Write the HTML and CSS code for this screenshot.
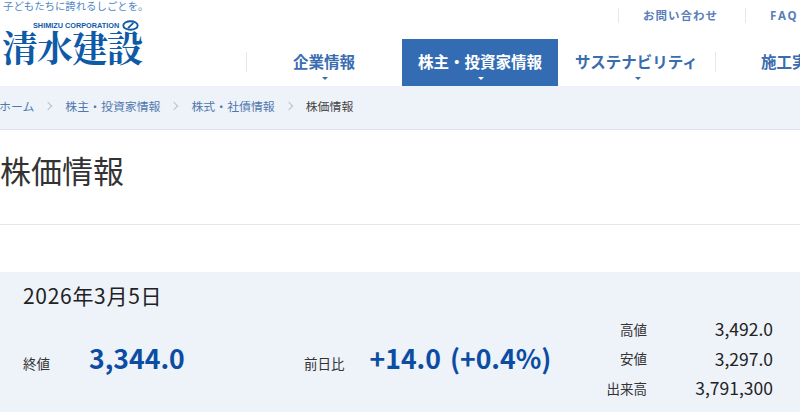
FILE: index.html
```html
<!DOCTYPE html>
<html lang="ja">
<head>
<meta charset="utf-8">
<title>株価情報</title>
<link rel="stylesheet" href="styles.css">
</head>
<body>
<header class="header">
  <div class="brand">
    <p class="tagline">子どもたちに誇れるしごとを。</p>
    <div class="logo">
      <div class="logo-en">
        <span>SHIMIZU CORPORATION</span>
        <svg class="logo-mark" width="17" height="11" viewBox="0 0 17 11"><ellipse cx="8.5" cy="5.5" rx="7.2" ry="4.3" fill="none" stroke="#0e5aa7" stroke-width="1.9"/><path d="M6 8.2 11.4 2.8" stroke="#0e5aa7" stroke-width="1.8" fill="none"/></svg>
      </div>
      <div class="logo-ja">清水建設</div>
    </div>
  </div>
  <div class="header-main">
    <ul class="util">
      <li class="util-item">お問い合わせ</li>
      <li class="util-item util-faq">FAQ</li>
    </ul>
    <nav class="nav">
      <a class="nav-item nav-first">企業情報</a>
      <a class="nav-item nav-active">株主・投資家情報</a>
      <a class="nav-item nav-third">サステナビリティ</a>
      <a class="nav-item nav-last">施工実績</a>
    </nav>
  </div>
</header>
<div class="crumbs">
  <a class="crumb">ホーム</a><span class="sep"></span>
  <a class="crumb">株主・投資家情報</a><span class="sep"></span>
  <a class="crumb">株式・社債情報</a><span class="sep"></span>
  <span class="crumb-now">株価情報</span>
</div>
<h1 class="title">株価情報</h1>
<section class="panel">
  <div class="date">2026年3月5日</div>
  <div class="stats">
    <div class="stat stat-close">
      <span class="label">終値</span><span class="value">3,344.0</span>
    </div>
    <div class="stat stat-change">
      <span class="label">前日比</span><span class="value">+14.0 (+0.4%)</span>
    </div>
    <dl class="side">
      <dt>高値</dt><dd>3,492.0</dd>
      <dt>安値</dt><dd>3,297.0</dd>
      <dt>出来高</dt><dd>3,791,300</dd>
    </dl>
  </div>
</section>
</body>
</html>
```
FILE: styles.css
```css
* { box-sizing: border-box; }
html, body { margin: 0; padding: 0; height: 412px; overflow: hidden; }
body { width: 800px; background: #fff; color: #222; font-family: "Noto Sans CJK JP", "Noto Sans", sans-serif; }
ul, dl, dd, p, h1 { margin: 0; padding: 0; }
ul { list-style: none; }

.header { display: flex; height: 86px; }
.brand { width: 246px; flex: none; }
.tagline { font-size: 10.4px; line-height: 12px; color: #4f86c6; padding-left: 3px; }
.logo { padding-left: 2px; }
.logo-en { display: flex; align-items: center; gap: 3px; margin: 8px 0 0 31px; height: 11px; font-family: "Liberation Sans", sans-serif; font-size: 7.3px; font-weight: 700; color: #0e5aa7; white-space: nowrap; }
.logo-mark { flex: none; }
.logo-ja { font-family: "Noto Serif CJK JP", "Noto Sans CJK JP", serif; font-size: 36px; line-height: 36px; font-weight: 700; color: #0e5aa7; margin-top: -2px; letter-spacing: -1px; white-space: nowrap; }

.header-main { flex: none; width: 554px; display: flex; flex-direction: column; }
.util { display: flex; height: 39px; padding: 8px 0 0 372px; }
.util-item { flex: none; height: 15px; padding: 0 27px 0 24px; border-left: 1px solid #e6e8ec; font-size: 11.5px; line-height: 15px; font-weight: 700; color: #5a7fb8; letter-spacing: 1px; white-space: nowrap; }
.util-faq { font-family: "Noto Sans", sans-serif; font-size: 11.5px; letter-spacing: 1.8px; }

.nav { display: flex; height: 47px; }
.nav-item { position: relative; flex: none; width: 156px; height: 47px; display: flex; justify-content: center; padding-top: 11px; font-size: 15.5px; line-height: 22px; font-weight: 700; color: #3a6cb0; white-space: nowrap; }
.nav-item::after { content: ""; position: absolute; left: 50%; bottom: 6px; margin-left: -2px; border: 3px solid transparent; border-top-color: #3a6cb0; border-bottom: 0; }
.nav-item:not(.nav-active)::before { content: ""; position: absolute; left: 0; top: 13px; height: 20px; border-left: 1px solid #e6e8ec; }
.nav-active { background: #336cb3; color: #fff; }
.nav-active::after { border-top-color: #fff; }
.nav-third { width: 157px; }
.nav-active + .nav-item::before { display: none; }
.nav-last { justify-content: flex-start; padding-left: 46px; }
.nav-last::after { display: none; }

.crumbs { height: 44px; display: flex; align-items: center; padding-bottom: 4px; background: #eef2f9; border-bottom: 1px solid #dfe2e8; font-size: 11.9px; color: #4f78ac; white-space: nowrap; }
.crumb { flex: none; }
.crumb:first-child { margin-left: -1px; }
.crumb-now { color: #444; }
.sep { flex: none; width: 6px; height: 6px; margin: 0 14px 0 11px; border-top: 1.5px solid #bcc0c6; border-right: 1.5px solid #bcc0c6; transform: rotate(45deg); }

.title { height: 95px; border-bottom: 1px solid #e4e6ea; font-size: 31px; line-height: 40px; font-weight: 400; padding-top: 20px; color: #333; }

.panel { margin-top: 47px; height: 141px; background: #eef2f9; padding: 9px 27px 0 23px; }
.date { font-size: 21px; line-height: 28px; color: #222; letter-spacing: .7px; }
.stats { display: flex; align-items: center; margin-top: 4px; }
.stat { flex: none; display: flex; align-items: baseline; }
.label { font-size: 13.5px; color: #333; }
.value { font-size: 26.6px; line-height: 36px; font-weight: 700; color: #0b4da2; white-space: nowrap; }
.stat-close { width: 281px; }
.stat-close .value { margin-left: 39px; }
.stat-change { width: 0; flex: 1; }
.stat-change .value { margin-left: 25px; word-spacing: 3px; }
.side { flex: none; width: 170px; display: grid; grid-template-columns: 1fr 126px; grid-auto-rows: 29.5px; align-items: center; padding-top: 1px; }
.side dt { font-size: 13.5px; text-align: right; color: #333; }
.side dd { font-size: 17.5px; text-align: right; color: #222; }
```
